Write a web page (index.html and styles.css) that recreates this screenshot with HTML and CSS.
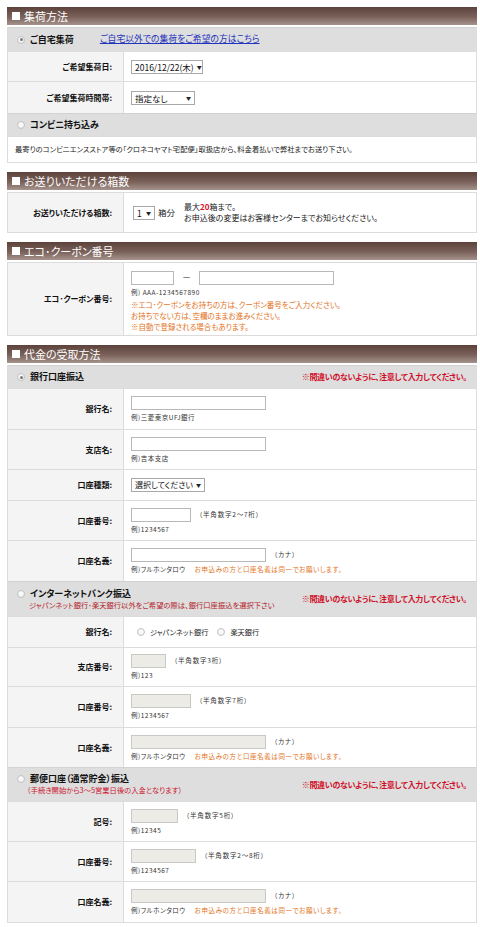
FILE: index.html
```html
<!DOCTYPE html>
<html lang="ja">
<head>
<meta charset="utf-8">
<title>集荷方法</title>
<link rel="stylesheet" href="styles.css">
</head>
<body>
<div class="wrap">

  <section class="sec">
    <h2 class="sec-head"><span class="sq"></span>集荷方法</h2>
    <div class="box">
      <div class="opt h24">
        <span class="radio on"></span><span class="opt-title">ご自宅集荷</span>
        <a class="link" href="#">ご自宅以外での集荷をご希望の方はこちら</a>
      </div>
      <div class="row h30">
        <div class="lbl">ご希望集荷日:</div>
        <div class="val"><span class="sel w72">2016/12/22(木)<span class="arr">▼</span></span></div>
      </div>
      <div class="row h32">
        <div class="lbl">ご希望集荷時間帯:</div>
        <div class="val"><span class="sel w64">指定なし<span class="arr">▼</span></span></div>
      </div>
      <div class="opt h23">
        <span class="radio"></span><span class="opt-title">コンビニ持ち込み</span>
      </div>
      <div class="txtrow">最寄りのコンビニエンスストア等の「クロネコヤマト宅配便」取扱店から、料金着払いで弊社までお送り下さい。</div>
    </div>
  </section>

  <section class="sec">
    <h2 class="sec-head"><span class="sq"></span>お送りいただける箱数</h2>
    <div class="box">
      <div class="row h40">
        <div class="lbl">お送りいただける箱数:</div>
        <div class="val val-inline">
          <span class="sel w22">1<span class="arr">▼</span></span>
          <span class="unit">箱分</span>
          <span class="boxnote">最大<b class="red">20</b>箱まで。<br>お申込後の変更はお客様センターまでお知らせください。</span>
        </div>
      </div>
    </div>
  </section>

  <section class="sec">
    <h2 class="sec-head"><span class="sq"></span>エコ･クーポン番号</h2>
    <div class="box">
      <div class="row h73">
        <div class="lbl">エコ･クーポン番号:</div>
        <div class="val val-top">
          <div class="line"><input class="inp w43" type="text"><span class="dash">－</span><input class="inp w135" type="text"></div>
          <div class="ex">例) AAA-1234567890</div>
          <div class="note">※エコ･クーポンをお持ちの方は、クーポン番号をご入力ください。<br>お持ちでない方は、空欄のままお進みください。<br>※自動で登録される場合もあります。</div>
        </div>
      </div>
    </div>
  </section>

  <section class="sec">
    <h2 class="sec-head"><span class="sq"></span>代金の受取方法</h2>
    <div class="box">
      <div class="opt h23">
        <span class="radio on"></span><span class="opt-title">銀行口座振込</span>
        <span class="warn">※間違いのないように、注意して入力してください。</span>
      </div>
      <div class="row h41">
        <div class="lbl">銀行名:</div>
        <div class="val"><input class="inp w135" type="text"><div class="ex">例)三菱東京UFJ銀行</div></div>
      </div>
      <div class="row h40">
        <div class="lbl">支店名:</div>
        <div class="val"><input class="inp w135" type="text"><div class="ex">例)吉本支店</div></div>
      </div>
      <div class="row h31">
        <div class="lbl">口座種類:</div>
        <div class="val"><span class="sel w74">選択してください<span class="arr">▼</span></span></div>
      </div>
      <div class="row h40">
        <div class="lbl">口座番号:</div>
        <div class="val"><div class="line"><input class="inp w60" type="text"><span class="hint">（半角数字2～7桁）</span></div><div class="ex">例)1234567</div></div>
      </div>
      <div class="row h41">
        <div class="lbl">口座名義:</div>
        <div class="val"><div class="line"><input class="inp w135" type="text"><span class="hint">（カナ）</span></div><div class="ex">例)フルホンタロウ<span class="exnote">お申込みの方と口座名義は同一でお願いします。</span></div></div>
      </div>

      <div class="opt h35">
        <div class="opt-stack">
          <div class="opt-line"><span class="radio"></span><span class="opt-title">インターネットバンク振込</span></div>
          <div class="opt-sub">ジャパンネット銀行･楽天銀行以外をご希望の際は、銀行口座振込を選択下さい</div>
        </div>
        <span class="warn">※間違いのないように、注意して入力してください。</span>
      </div>
      <div class="row h31">
        <div class="lbl">銀行名:</div>
        <div class="val val-inline"><span class="radio"></span><span class="rtxt">ジャパンネット銀行</span><span class="radio"></span><span class="rtxt">楽天銀行</span></div>
      </div>
      <div class="row h39">
        <div class="lbl">支店番号:</div>
        <div class="val"><div class="line"><input class="inp dis w35" type="text" disabled><span class="hint">（半角数字3桁）</span></div><div class="ex">例)123</div></div>
      </div>
      <div class="row h41">
        <div class="lbl">口座番号:</div>
        <div class="val"><div class="line"><input class="inp dis w60" type="text" disabled><span class="hint">（半角数字7桁）</span></div><div class="ex">例)1234567</div></div>
      </div>
      <div class="row h40">
        <div class="lbl">口座名義:</div>
        <div class="val"><div class="line"><input class="inp dis w135" type="text" disabled><span class="hint">（カナ）</span></div><div class="ex">例)フルホンタロウ<span class="exnote">お申込みの方と口座名義は同一でお願いします。</span></div></div>
      </div>

      <div class="opt h34">
        <div class="opt-stack">
          <div class="opt-line"><span class="radio"></span><span class="opt-title">郵便口座（通常貯金）振込</span></div>
          <div class="opt-sub sub-red">（手続き開始から3～5営業日後の入金となります）</div>
        </div>
        <span class="warn">※間違いのないように、注意して入力してください。</span>
      </div>
      <div class="row h40">
        <div class="lbl">記号:</div>
        <div class="val"><div class="line"><input class="inp dis w47" type="text" disabled><span class="hint">（半角数字5桁）</span></div><div class="ex">例)12345</div></div>
      </div>
      <div class="row h40">
        <div class="lbl">口座番号:</div>
        <div class="val"><div class="line"><input class="inp dis w65" type="text" disabled><span class="hint">（半角数字2～8桁）</span></div><div class="ex">例)1234567</div></div>
      </div>
      <div class="row h41">
        <div class="lbl">口座名義:</div>
        <div class="val"><div class="line"><input class="inp dis w135" type="text" disabled><span class="hint">（カナ）</span></div><div class="ex">例)フルホンタロウ<span class="exnote">お申込みの方と口座名義は同一でお願いします。</span></div></div>
      </div>
    </div>
  </section>

</div>
</body>
</html>
```

FILE: styles.css
```css
* { box-sizing: border-box; }

body {
  margin: 0;
  padding: 7px 3px 4px 7px;
  background: #fff;
  color: #222;
  font-family: "Noto Sans CJK JP", "Noto Sans", sans-serif;
  font-feature-settings: "palt";
  line-height: 1.2;
}

.wrap { width: 470px; }

.sec { margin-bottom: 9px; }

.sec-head {
  margin: 0 0 2px;
  height: 18px;
  display: flex;
  align-items: center;
  gap: 4px;
  padding-left: 5px;
  background: linear-gradient(#5c423a, #7a625a 55%, #a5938d);
  color: #fff;
  font-size: 11px;
  font-weight: normal;
  line-height: 18px;
}

.sq {
  width: 8px;
  height: 8px;
  background: #fff;
}

.box {
  border: 1px solid #dcdcdc;
  border-top: none;
}

/* option (gray) rows */
.opt {
  display: flex;
  align-items: center;
  background: #dedede;
  border-top: 1px solid #d2d2d2;
  padding: 0 9px;
  overflow: hidden;
}
.h23 { height: 23px; }
.h24 { height: 24px; }
.h34 { height: 34px; }
.h35 { height: 35px; }

.opt-title {
  margin-left: 5px;
  font-size: 9px;
  font-weight: bold;
  color: #111;
  line-height: 12px;
  white-space: nowrap;
}
.opt-stack {
  display: flex;
  flex-direction: column;
  flex: none;
}
.opt-line {
  display: flex;
  align-items: center;
}
.opt-sub {
  margin-left: 12px;
  font-size: 7.3px;
  line-height: 11px;
  color: #b3222a;
  white-space: nowrap;
}
.opt-sub.sub-red { color: #cc1530; margin-left: 10px; }

.link {
  margin-left: 26px;
  font-size: 8.8px;
  color: #2233bb;
  text-decoration: underline;
  white-space: nowrap;
}

.warn {
  margin-left: auto;
  font-size: 8px;
  letter-spacing: -0.3px;
  font-weight: bold;
  color: #d0102a;
  white-space: nowrap;
}

.radio {
  flex: none;
  width: 8px;
  height: 8px;
  border-radius: 50%;
  border: 1px solid #c4c4c4;
  background: radial-gradient(circle at 50% 40%, #ffffff, #e8e8e8);
  display: inline-flex;
  align-items: center;
  justify-content: center;
}
.radio.on::after {
  content: "";
  width: 3px;
  height: 3px;
  border-radius: 50%;
  background: #777;
}

/* label/value rows */
.row {
  display: grid;
  grid-template-columns: 116px 1fr;
  border-top: 1px solid #dcdcdc;
  overflow: hidden;
}
.h30 { height: 30px; }
.h31 { height: 31px; }
.h32 { height: 32px; }
.h39 { height: 39px; }
.h40 { height: 40px; }
.h41 { height: 41px; }
.h73 { height: 73px; }

.lbl {
  background: #f4f4f4;
  border-right: 1px solid #dcdcdc;
  display: flex;
  align-items: center;
  justify-content: flex-end;
  padding-right: 11px;
  font-size: 8px;
  font-weight: bold;
  color: #111;
  white-space: nowrap;
}

.val {
  padding: 0 7px;
  display: flex;
  flex-direction: column;
  justify-content: center;
  align-items: flex-start;
}
.val-inline {
  flex-direction: row;
  align-items: center;
  justify-content: flex-start;
}
.val-top {
  justify-content: flex-start;
  padding-top: 8px;
}

.line {
  display: flex;
  align-items: center;
  height: 14px;
}

.inp {
  height: 14px;
  margin: 0;
  padding: 0 2px;
  border: 1px solid #b8b8b8;
  background: #fff;
  font-size: 9px;
}
.inp.dis {
  background: #ecebe6;
  border-color: #c8c8c4;
}
.w35 { width: 35px; }
.w43 { width: 43px; }
.w47 { width: 47px; }
.w60 { width: 60px; }
.w65 { width: 65px; }
.w135 { width: 135px; }

.sel {
  height: 14px;
  display: inline-flex;
  align-items: center;
  justify-content: space-between;
  padding: 0 3px;
  border: 1px solid #a8a8a8;
  background: #fff;
  font-size: 8.5px;
  color: #111;
  line-height: 12px;
  white-space: nowrap;
}
.arr {
  font-size: 5px;
  margin-left: 3px;
  color: #222;
}
.w22 { width: 22px; margin-left: 2px; }
.w64 { width: 64px; }
.w72 { width: 72px; }
.w74 { width: 74px; font-size: 8px; }

.unit {
  margin-left: 3px;
  font-size: 8.5px;
}
.boxnote {
  margin-left: 9px;
  font-size: 8px;
  line-height: 11px;
  margin-top: -2px;
  white-space: nowrap;
}
.red { color: #d0102a; }

.dash {
  margin: 0 8px;
  font-size: 9px;
  color: #444;
}

.ex {
  margin-top: 3px;
  font-size: 6.5px;
  letter-spacing: 0.5px;
  color: #333;
  line-height: 9px;
  white-space: nowrap;
}
.exnote {
  margin-left: 9px;
  color: #e2731c;
  letter-spacing: 0.6px;
}

.hint {
  margin-left: 8px;
  font-size: 6.5px;
  letter-spacing: 0.8px;
  color: #333;
  white-space: nowrap;
}

.note {
  margin-top: 2px;
  font-size: 7.5px;
  line-height: 11px;
  color: #e2731c;
  white-space: nowrap;
}

.rtxt {
  margin: 0 9px 0 5px;
  font-size: 7.2px;
  color: #222;
}
.val-inline .radio:first-child { margin-left: 6px; }

.txtrow {
  border-top: 1px solid #dcdcdc;
  height: 26px;
  display: flex;
  align-items: center;
  padding-left: 7px;
  font-size: 7.3px;
  color: #222;
  white-space: nowrap;
}
```
